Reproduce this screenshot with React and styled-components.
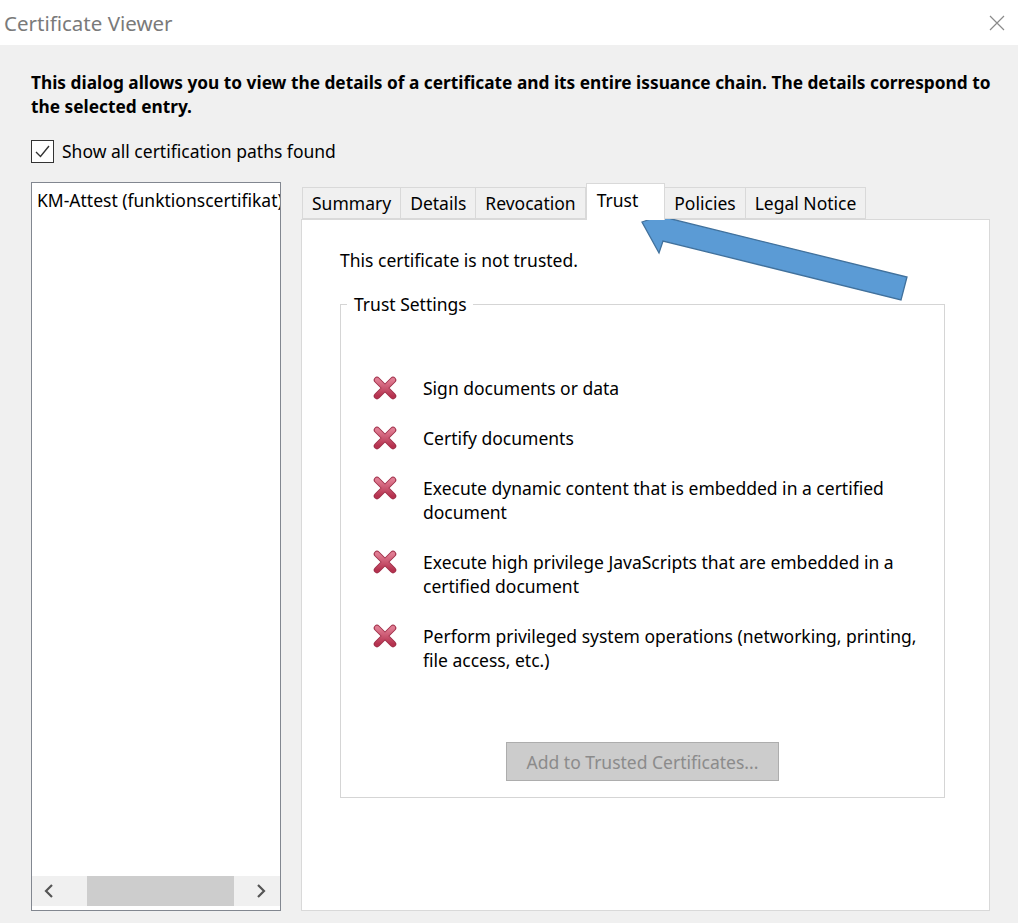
import React from 'react'
import styled, { createGlobalStyle } from 'styled-components'

const GlobalStyle = createGlobalStyle`
  html, body { margin: 0; padding: 0; background: #f0f0f0; }
  body { font-family: "Noto Sans", "Open Sans", sans-serif; color: #000; }
`

const Window = styled.div`
  position: relative;
  width: 1018px;
  height: 923px;
  background: #f0f0f0;
  overflow: hidden;
`
const TitleBar = styled.div`
  height: 45px;
  background: #fff;
  display: flex;
  align-items: center;
  justify-content: space-between;
  padding: 0 12px 0 4px;
  font-size: 20.5px;
  color: #7a7a7a;
`
const Close = styled.div`
  width: 18px;
  height: 18px;
  display: flex;
  align-items: center;
  justify-content: center;
`
const Body = styled.div`
  padding: 26px 28px 0 31px;
  font-size: 17.5px;
`
const Intro = styled.div`
  font-weight: 700;
  font-size: 17.3px;
  line-height: 24px;
  white-space: nowrap;
`
const CheckRow = styled.label`
  display: flex;
  align-items: center;
  gap: 8px;
  margin-top: 20px;
  height: 24px;
`
const Box = styled.span`
  width: 21px;
  height: 21px;
  border: 1px solid #333;
  background: #fff;
  display: flex;
  align-items: center;
  justify-content: center;
`
const Main = styled.div`
  display: flex;
  gap: 20px;
  margin-top: 19px;
  height: 729px;
`
const List = styled.div`
  width: 248px;
  border: 1px solid #828790;
  background: #fff;
  display: flex;
  flex-direction: column;
`
const ListItem = styled.div`
  padding: 5px 5px 0;
  white-space: nowrap;
  overflow: hidden;
  flex: 1;
`
const HScroll = styled.div`
  height: 30px;
  margin-bottom: 4px;
  background: #f0f0f0;
  display: flex;
  align-items: center;
`
const ScrollArrow = styled.div`
  width: ${p => p.$w}px;
  height: 30px;
  display: flex;
  align-items: center;
  justify-content: center;
`
const Thumb = styled.div`
  width: 147px;
  height: 30px;
  margin-left: 21px;
  background: #cdcdcd;
`
const Track = styled.div`
  flex: 1;
`
const TabArea = styled.div`
  flex: 1;
  display: flex;
  flex-direction: column;
`
const TabStrip = styled.div`
  display: flex;
  align-items: flex-end;
  height: 37px;
  padding-left: 1px;
  position: relative;
  z-index: 1;
`
const Tab = styled.div`
  height: ${p => (p.$active ? '37px' : '32px')};
  margin-bottom: ${p => (p.$active ? '-1px' : '0')};
  padding: 0 ${p => (p.$active ? '26px' : '9px')} 0 ${p => (p.$active ? '10px' : '9px')};
  padding-top: ${p => (p.$active ? '4px' : '0')};
  border: 1px solid #d9d9d9;
  border-left: ${p => (p.$first || p.$active ? '1px solid #d9d9d9' : 'none')};
  border-bottom: ${p => (p.$active ? 'none' : '1px solid #d9d9d9')};
  background: ${p => (p.$active ? '#fff' : '#f0f0f0')};
  display: flex;
  align-items: ${p => (p.$active ? 'flex-start' : 'center')};
  box-sizing: border-box;
`
const Panel = styled.div`
  flex: 1;
  background: #fff;
  border: 1px solid #d9d9d9;
  padding: 28px 44px 0 38px;
`
const Status = styled.div`
  line-height: 24px;
`
const Group = styled.fieldset`
  margin: 20px 0 0;
  padding: 0 20px 0 32px;
  border: 1px solid #d5d5d5;
  height: 506px;
  box-sizing: border-box;
  display: flex;
  flex-direction: column;
`
const Legend = styled.legend`
  margin-left: -26px;
  padding: 0 6px 0 7px;
  line-height: 24px;
`
const Items = styled.div`
  margin-top: 60px;
  display: flex;
  flex-direction: column;
  gap: 26px;
`
const Item = styled.div`
  display: flex;
  align-items: flex-start;
  gap: 26px;
  line-height: 24px;
`
const IconBox = styled.div`
  width: 24px;
  height: 24px;
  flex: none;
  display: flex;
  align-items: center;
  justify-content: center;
`
const Button = styled.button`
  align-self: center;
  margin: auto 0 16px -12px;
  width: 273px;
  height: 39px;
  background: #cccccc;
  border: 1px solid #adadad;
  color: #8b8b8b;
  font-family: inherit;
  font-size: 17.5px;
`
const Overlay = styled.svg`
  position: absolute;
  left: 630px;
  top: 200px;
`

const Cross = () => (
  <svg width="24" height="24" viewBox="0 0 24 24">
    <defs>
      <linearGradient id="xg" x1="0" y1="0" x2="0" y2="1">
        <stop offset="0" stopColor="#e07d93" />
        <stop offset="1" stopColor="#b5324f" />
      </linearGradient>
    </defs>
    <path d="M4 4 L20 20 M20 4 L4 20" stroke="#9e2d47" strokeWidth="6.5" strokeLinecap="round" />
    <path d="M4 4 L20 20 M20 4 L4 20" stroke="url(#xg)" strokeWidth="4.6" strokeLinecap="round" />
  </svg>
)

const items = [
  ['Sign documents or data'],
  ['Certify documents'],
  ['Execute dynamic content that is embedded in a certified', 'document'],
  ['Execute high privilege JavaScripts that are embedded in a', 'certified document'],
  ['Perform privileged system operations (networking, printing,', 'file access, etc.)'],
]

const tabs = ['Summary', 'Details', 'Revocation', 'Trust', 'Policies', 'Legal Notice']

export default function App() {
  return (
    <Window>
      <GlobalStyle />
      <TitleBar>
        Certificate Viewer
        <Close>
          <svg width="16" height="16" viewBox="0 0 16 16">
            <path d="M1 1 L15 15 M15 1 L1 15" stroke="#8a8a8a" strokeWidth="1.2" />
          </svg>
        </Close>
      </TitleBar>
      <Body>
        <Intro>
          This dialog allows you to view the details of a certificate and its entire issuance chain. The details correspond to
          <br />
          the selected entry.
        </Intro>
        <CheckRow>
          <Box>
            <svg width="17" height="17" viewBox="0 0 17 17">
              <path d="M2 9 L6.5 13.5 L15 3" stroke="#333" strokeWidth="1.4" fill="none" />
            </svg>
          </Box>
          Show all certification paths found
        </CheckRow>
        <Main>
          <List>
            <ListItem>KM-Attest (funktionscertifikat)</ListItem>
            <HScroll>
              <ScrollArrow $w={34}>
                <svg width="12" height="14" viewBox="0 0 12 14">
                  <path d="M9 1 L3 7 L9 13" stroke="#555" strokeWidth="2.2" fill="none" />
                </svg>
              </ScrollArrow>
              <Thumb />
              <Track />
              <ScrollArrow $w={38}>
                <svg width="12" height="14" viewBox="0 0 12 14">
                  <path d="M3 1 L9 7 L3 13" stroke="#555" strokeWidth="2.2" fill="none" />
                </svg>
              </ScrollArrow>
            </HScroll>
          </List>
          <TabArea>
            <TabStrip>
              {tabs.map((t, i) => (
                <Tab key={t} $first={i === 0} $active={t === 'Trust'}>{t}</Tab>
              ))}
            </TabStrip>
            <Panel>
              <Status>This certificate is not trusted.</Status>
              <Group>
                <Legend>Trust Settings</Legend>
                <Items>
                  {items.map(lines => (
                    <Item key={lines[0]}>
                      <IconBox><Cross /></IconBox>
                      <div>
                        {lines.map(l => <div key={l}>{l}</div>)}
                      </div>
                    </Item>
                  ))}
                </Items>
                <Button disabled>Add to Trusted Certificates...</Button>
              </Group>
            </Panel>
          </TabArea>
        </Main>
      </Body>
      <Overlay width="290" height="110" viewBox="630 200 290 110">
        <polygon
          points="642,222 668,213 671,219 907,277 901,300 663,241 659,253"
          fill="#5b9bd5"
          stroke="#41719c"
          strokeWidth="1.3"
          strokeLinejoin="miter"
        />
      </Overlay>
    </Window>
  )
}
